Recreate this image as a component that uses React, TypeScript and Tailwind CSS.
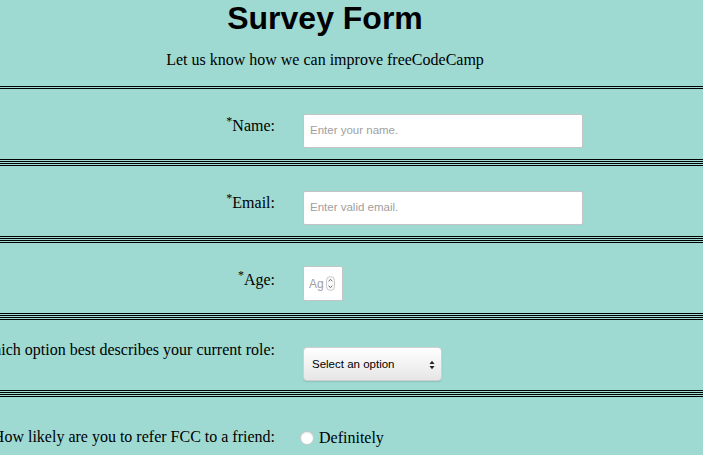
import React from "react";

function Star() {
  return <span className="relative -top-[6px] text-[12px] leading-none">*</span>;
}

function Section({ children, className = "" }: { children: React.ReactNode; className?: string }) {
  return (
    <div className={"h-[76px] border-y-[3px] border-double border-black mb-px flex items-start " + className}>
      {children}
    </div>
  );
}

function Label({ children, mt }: { children: React.ReactNode; mt: string }) {
  return (
    <div className={"w-[275px] shrink-0 flex justify-end whitespace-nowrap leading-[18px] text-[16px] " + mt}>
      <span>{children}</span>
    </div>
  );
}

export default function App() {
  return (
    <div
      className="w-[703px] h-[455px] overflow-hidden bg-[#9edad2] text-black"
      style={{ fontFamily: '"Liberation Serif", "Times New Roman", serif' }}
    >
      <div className="w-[650px] text-center h-[86px]">
        <h1
          className="text-[32px] leading-[37px] font-bold"
          style={{ fontFamily: '"Liberation Sans", Arial, sans-serif' }}
        >
          Survey Form
        </h1>
        <p className="mt-[14px] text-[16px] leading-[18px]">Let us know how we can improve freeCodeCamp</p>
      </div>

      <Section>
        <Label mt="mt-[28px]">
          <Star />
          Name:
        </Label>
        <div className="ml-[28px] mt-[25px] w-[280px] h-[34px] bg-white border border-[#c4c4c4] rounded-[2px] flex items-center pl-[6px]">
          <span
            className="text-[11.5px] text-[#a0a0a0]"
            style={{ fontFamily: '"Liberation Sans", Arial, sans-serif' }}
          >
            Enter your name.
          </span>
        </div>
      </Section>

      <Section>
        <Label mt="mt-[28px]">
          <Star />
          Email:
        </Label>
        <div className="ml-[28px] mt-[25px] w-[280px] h-[34px] bg-white border border-[#c4c4c4] rounded-[2px] flex items-center pl-[6px]">
          <span
            className="text-[11.5px] text-[#a0a0a0]"
            style={{ fontFamily: '"Liberation Sans", Arial, sans-serif' }}
          >
            Enter valid email.
          </span>
        </div>
      </Section>

      <Section>
        <Label mt="mt-[28px]">
          <Star />
          Age:
        </Label>
        <div className="ml-[28px] mt-[23px] w-[40px] h-[35px] bg-white border border-[#c4c4c4] rounded-[2px] flex items-center pl-[5px] gap-[2px]">
          <span
            className="text-[12px] text-[#a0a0a0]"
            style={{ fontFamily: '"Liberation Sans", Arial, sans-serif' }}
          >
            Ag
          </span>
          <svg width="9" height="15" viewBox="0 0 9 15">
            <rect x="0.5" y="0.5" width="8" height="14" rx="4" fill="#fafafa" stroke="#c8c8c8" />
            <path d="M2.6 5.2 L4.5 3.4 L6.4 5.2" fill="none" stroke="#555" strokeWidth="0.9" />
            <path d="M2.6 9.8 L4.5 11.6 L6.4 9.8" fill="none" stroke="#555" strokeWidth="0.9" />
          </svg>
        </div>
      </Section>

      <Section>
        <Label mt="mt-[21px]">Which option best describes your current role:</Label>
        <div
          className="ml-[28px] mt-[27px] w-[139px] h-[34px] rounded-[4px] border border-[#d0d0d0] bg-gradient-to-b from-white to-[#e6e6e6] shadow-[0_1px_1px_rgba(0,0,0,0.12)] flex items-center justify-between pl-[8px] pr-[6px] pt-[2px]"
          style={{ fontFamily: '"Liberation Sans", Arial, sans-serif' }}
        >
          <span className="text-[11.5px] text-black">Select an option</span>
          <svg width="6" height="10" viewBox="0 0 6 10">
            <path d="M0.5 4 L3 0.8 L5.5 4 Z" fill="#222" />
            <path d="M0.5 6 L3 9.2 L5.5 6 Z" fill="#222" />
          </svg>
        </div>
      </Section>

      <div className="h-[76px] border-t-[3px] border-double border-black flex items-start">
        <Label mt="mt-[31px]">How likely are you to refer FCC to a friend:</Label>
        <div className="ml-[25px] mt-[32px] flex items-center gap-[5px]">
          <span className="w-[14px] h-[14px] rounded-full bg-white border border-[#c8c8c8] shadow-[inset_0_1px_1px_rgba(0,0,0,0.08)]" />
          <span className="text-[16px] leading-[18px]">Definitely</span>
        </div>
      </div>
    </div>
  );
}
